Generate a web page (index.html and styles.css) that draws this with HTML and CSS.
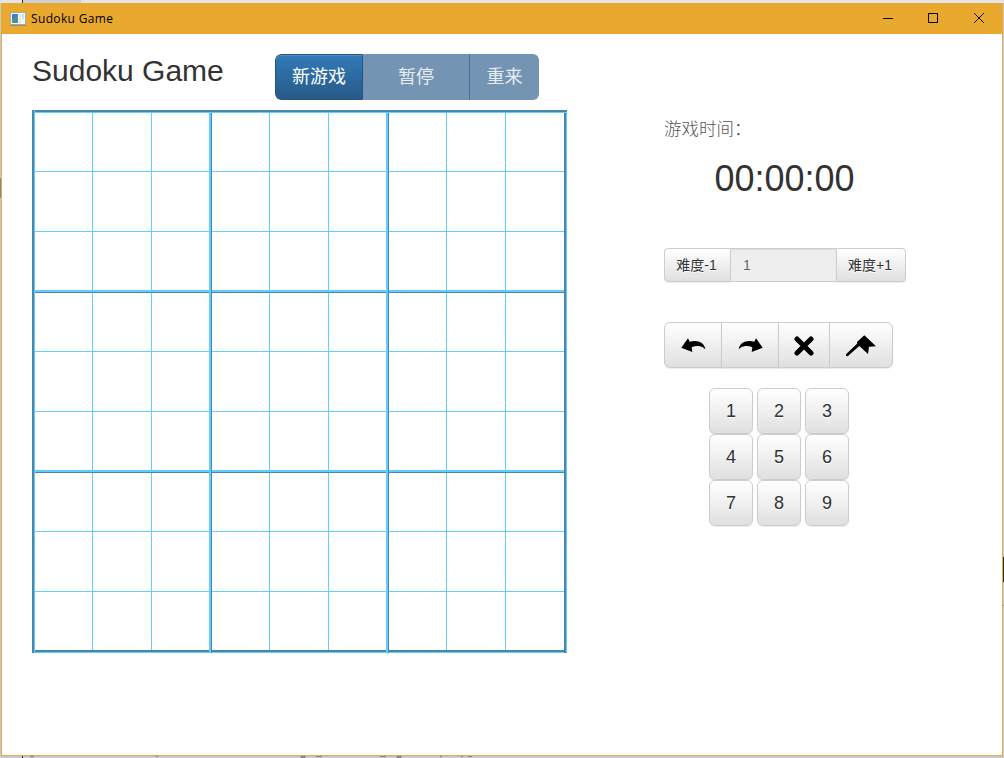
FILE: index.html
```
<!DOCTYPE html>
<html lang="zh">
<head>
<meta charset="utf-8">
<title>Sudoku Game</title>
<link rel="stylesheet" href="styles.css">
</head>
<body>
<div class="window">
  <header class="titlebar">
    <svg class="app-icon" width="16" height="14" viewBox="0 0 16 14"><rect x=".5" y=".5" width="15" height="12" fill="#f6f6f2" stroke="#9eabb5"/><rect x="2" y="2" width="6" height="9" fill="#4d9292"/><path d="M2 2h6L2 8z" fill="#477eb0"/><rect x="9" y="2" width="2" height="9" fill="#e4e4e4"/><rect x="12" y="2" width="2" height="5" fill="#cfe0dc"/><path d="M0 13.5h16" stroke="#a18a62"/></svg>
    <span class="caption">Sudoku Game</span>
    <svg class="controls" width="102" height="12" viewBox="0 0 102 12" fill="none" stroke="#000" shape-rendering="crispEdges"><path d="M0 5.5h10M45.500 .5h9v9h-9z"/><path d="M91 0l10 10M101 0l-10 10" shape-rendering="auto"/></svg>
  </header>
  <main class="content">
    <section class="play">
      <div class="heading">
        <h1>Sudoku Game</h1>
        <div class="menu"><button class="primary">新游戏</button><button class="off pause">暂停</button><button class="off">重来</button></div>
      </div>
      <div class="frame"><div class="board">
        <i></i><i></i><i></i><i></i><i></i><i></i><i></i><i></i><i></i>
        <i></i><i></i><i></i><i></i><i></i><i></i><i></i><i></i><i></i>
        <i></i><i></i><i></i><i></i><i></i><i></i><i></i><i></i><i></i>
        <i></i><i></i><i></i><i></i><i></i><i></i><i></i><i></i><i></i>
        <i></i><i></i><i></i><i></i><i></i><i></i><i></i><i></i><i></i>
        <i></i><i></i><i></i><i></i><i></i><i></i><i></i><i></i><i></i>
        <i></i><i></i><i></i><i></i><i></i><i></i><i></i><i></i><i></i>
        <i></i><i></i><i></i><i></i><i></i><i></i><i></i><i></i><i></i>
        <i></i><i></i><i></i><i></i><i></i><i></i><i></i><i></i><i></i>
      </div></div>
    </section>
    <aside class="panel">
      <p class="label">游戏时间：</p>
      <div class="clock">00:00:00</div>
      <div class="level"><button class="btn">难度-1</button><span class="value">1</span><button class="btn">难度+1</button></div>
      <div class="tools">
        <button class="btn"><svg width="25" height="15" viewBox="92 86 75 45"><path d="M93 115L113 87L118 97Q133 93 147 97Q163 103 165 120Q158 111 145 110Q134 109 124 114L126 128Z"/></svg></button>
        <button class="btn"><svg width="25" height="15" viewBox="262 86 75 45"><path d="M336 115L316 87L311 97Q296 93 282 97Q266 103 264 120Q271 111 284 110Q295 109 305 114L303 128Z"/></svg></button>
        <button class="btn"><svg width="20" height="20" viewBox="432 78 60 60"><path d="M441 87L483 129M483 87L441 129" stroke="#000" stroke-width="15" stroke-linecap="round"/></svg></button>
        <button class="btn"><svg width="30" height="22" viewBox="588 76 90 66"><path d="M643 77L678 110L657 111L654 133L628 109L593 140L588 139V134L621 102V97Z"/></svg></button>
      </div>
      <div class="keys">
        <button class="btn">1</button><button class="btn">2</button><button class="btn">3</button>
        <button class="btn">4</button><button class="btn">5</button><button class="btn">6</button>
        <button class="btn">7</button><button class="btn">8</button><button class="btn">9</button>
      </div>
    </aside>
  </main>
</div>
<svg class="backdrop" width="1004" height="758" viewBox="0 0 1004 758" shape-rendering="crispEdges"><path d="M0 0h1004v3H0z" fill="#e4e4e7"/><path d="M23 0h58v3H23z" fill="#cecfd3"/><path d="M22 0h1v3h-1zM22 756h1v2h-1zM1003 557h1v25h-1z" fill="#332a20"/><path d="M30 756h4v1h-4zM156 756h2v1h-2zM300 756h6v1h-6zM301 757h4v1h-4zM316 756h6v1h-6zM380 756h6v1h-6zM396 756h6v1h-6zM397 757h4v1h-4zM440 756h2v1h-2zM461 756h2v1h-2zM468 756h4v1h-4zM0 178h1v20H0zM1003 605h1v1h-1z" fill="#888"/></svg>
</body>
</html>
```
FILE: styles.css
```
* { box-sizing: border-box; }
body { margin: 0; width: 1004px; height: 758px; padding: 3px 1px 2px; background: #c9c9c9; overflow: hidden; font-family: "Liberation Sans", "Noto Sans CJK SC", sans-serif; color: #333; }
.window { width: 1002px; height: 753px; border: 1px solid #e3ad4e; background: #fff; position: relative; z-index: 1; }
.backdrop { position: absolute; left: 0; top: 0; }
.titlebar { height: 31px; margin: -1px -1px 0; background: #e9a82e; display: flex; align-items: center; padding: 0 18px 0 9px; color: #000; }
.app-icon { margin-right: 5px; }
.caption { font: 12px "Open Sans", "Noto Sans", sans-serif; letter-spacing: .35px; line-height: 16px; flex: 1; }
.content { display: flex; padding: 0 0 0 30px; }
.play { width: 632px; }
.heading { display: flex; height: 76px; padding-top: 20px; }
h1 { font-weight: 400; font-size: 30px; line-height: 33px; margin: 0; width: 243px; white-space: nowrap; }
button { font-family: inherit; margin: 0; padding: 0; display: block; }
.menu { display: flex; width: 264px; height: 46px; border-radius: 6px; overflow: hidden; }
.menu button { border: 0; color: #fff; font-size: 18px; line-height: 24px; }
.menu .primary { width: 88px; border: 1px solid #245580; border-radius: 6px 0 0 6px; background: linear-gradient(#337ab7, #265a88); box-shadow: inset 0 1px 0 rgba(255,255,255,.15); }
.menu .off { width: 69px; background: #7394b3; color: #e8edf2; }
.menu .pause { width: 107px; border-right: 1px solid #46719a; }
.frame { width: 535px; border-left: 2px solid #4488ae; }
.board {
  --light: linear-gradient(#66ccff, #66ccff);
  border-left: 1px solid #66ccff;
  background: linear-gradient(#4488ae 2px, #66ccff 2px, #66ccff 3px, #fff 3px);
  padding-top: 3px;
  display: grid;
  grid-template-columns: 58px 59px 60px 58px 59px 60px 58px 59px 61px;
  grid-template-rows: 59px 60px 61px 59px 60px 61px 59px 60px 61px;
}
.board i {
  --v: var(--light); --h: var(--light); --vw: 1px; --hw: 1px;
  background-image: var(--h), var(--v);
  background-size: 100% var(--hw), var(--vw) 100%;
  background-position: left bottom, right top;
  background-repeat: no-repeat;
}
.board i:nth-child(n+19):nth-child(-n+27), .board i:nth-child(n+46):nth-child(-n+54) { --hw: 3px; --h: linear-gradient(#66ccff 2px, #4488ae 2px); }
.board i:nth-child(n+73) { --hw: 3px; --h: linear-gradient(#4488ae 2px, #66ccff 2px); }
.board i:nth-child(3n) {
  --vw: 3px; --v: linear-gradient(90deg, #66ccff 2px, #4488ae 2px);
  background-image: var(--v), var(--h);
  background-size: var(--vw) 100%, 100% var(--hw);
  background-position: right top, left bottom;
}
.board i:nth-child(9n) { --v: linear-gradient(90deg, #4488ae 2px, #66ccff 2px); }
.panel { padding-top: 83px; width: 300px; }
.label { margin: 0; height: 24px; font-size: 17.5px; line-height: 24px; font-weight: 300; color: #555; }
.clock { width: 241px; text-align: center; margin-top: 18px; font-size: 36px; line-height: 40px; }
.btn { border: 1px solid #ccc; background: linear-gradient(#fff, #e0e0e0); box-shadow: inset 0 1px 0 rgba(255,255,255,.15), 0 1px 1px rgba(0,0,0,.075); color: #333; text-shadow: 0 1px 0 #fff; }
.level { display: flex; width: 242px; height: 34px; margin-top: 49px; font-size: 14px; }
.level .btn { width: 67px; font-size: 14px; line-height: 20px; padding-right: 2px; border-radius: 4px 0 0 4px; }
.level .btn:last-child { width: 70px; border-radius: 0 4px 4px 0; }
.value { flex: 1; background: #eee; color: #666; padding: 5px 13px 6px 12px; line-height: 22px; border: solid #ccc; border-width: 1px 0; box-shadow: inset 0 1px 1px rgba(0,0,0,.075); }
.tools { display: flex; width: 229px; height: 46px; margin-top: 40px; }
.tools .btn { width: 58px; margin-right: -1px; display: flex; align-items: center; justify-content: center; }
.tools .btn:first-child { border-radius: 6px 0 0 6px; }
.tools .btn:nth-child(3) { width: 52px; }
.tools .btn:last-child { width: 64px; margin-right: 0; border-radius: 0 6px 6px 0; }
.tools svg { margin-top: 1px; }
.keys { display: grid; grid-template-columns: repeat(3, 44px); grid-auto-rows: 46px; column-gap: 4px; margin: 20px 0 0 45px; }
.keys .btn { border-radius: 6px; font-size: 18px; line-height: 24px; }
```
